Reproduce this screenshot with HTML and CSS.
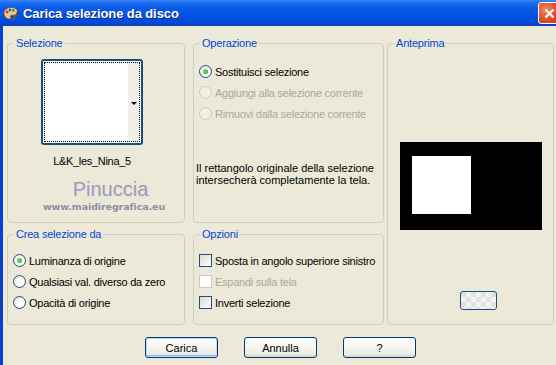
FILE: index.html
```html
<!DOCTYPE html>
<html lang="it">
<head>
  <meta charset="UTF-8">
  <title>Carica selezione da disco</title>
  <link rel="stylesheet" href="styles.css">
</head>
<body>
  <div class="window">
    <!-- Title bar -->
    <div class="titlebar">
      <svg class="app-icon" width="16" height="16" viewBox="0 0 16 16">
        <path d="M8 1.5c-4 0-7 2.5-7 6 0 3 2.4 5.5 5.5 5.5 1.3 0 1.5-1 1-1.8-.6-1 .1-1.9 1.2-1.9h2c2 0 3.8-1.3 3.8-3.4 0-2.6-2.8-4.4-6.5-4.4z" fill="#e8c89a" stroke="#7a5030" stroke-width="0.8"/>
        <circle cx="4.2" cy="6" r="1.3" fill="#e02020"/>
        <circle cx="7" cy="4" r="1.3" fill="#2050e0"/>
        <circle cx="10.3" cy="4.4" r="1.3" fill="#20a020"/>
        <circle cx="4.3" cy="9.4" r="1.2" fill="#f0d020"/>
        <path d="M9 14.5l6-8" stroke="#8a4a20" stroke-width="1.6"/>
        <path d="M14 7.6l1.4-1.8" stroke="#404040" stroke-width="1.8"/>
      </svg>
      <span class="title">Carica selezione da disco</span>
      <span class="close-btn">
        <svg width="13" height="13" viewBox="0 0 13 13"><path d="M2.5 2.5l8 8M10.5 2.5l-8 8" stroke="#fff" stroke-width="2"/></svg>
      </span>
    </div>

    <div class="frame">
      <div class="groups">
        <!-- Selezione -->
        <div class="group g-selezione">
          <div class="legend">Selezione</div>
          <div class="thumb">
            <div class="thumb-inner"><span class="thumb-arrow"></span></div>
          </div>
          <div class="thumb-name">L&amp;K_les_Nina_5</div>
          <div class="watermark">
            <div class="wm-name">Pinuccia</div>
            <div class="wm-url">www.maidiregrafica.eu</div>
          </div>
        </div>

        <!-- Operazione -->
        <div class="group g-operazione">
          <div class="legend">Operazione</div>
          <div class="options">
            <div class="opt"><span class="radio checked"></span>Sostituisci selezione</div>
            <div class="opt disabled"><span class="radio"></span>Aggiungi alla selezione corrente</div>
            <div class="opt disabled"><span class="radio"></span>Rimuovi dalla selezione corrente</div>
          </div>
          <p class="note">Il rettangolo originale della selezione<br>intersecherà completamente la tela.</p>
        </div>

        <!-- Anteprima -->
        <div class="group g-anteprima">
          <div class="legend">Anteprima</div>
          <div class="preview"><div class="preview-sel"></div></div>
          <div class="preview-btn"></div>
        </div>

        <!-- Crea selezione da -->
        <div class="group g-crea">
          <div class="legend">Crea selezione da</div>
          <div class="options options-low">
            <div class="opt"><span class="radio checked"></span>Luminanza di origine</div>
            <div class="opt"><span class="radio"></span>Qualsiasi val. diverso da zero</div>
            <div class="opt"><span class="radio"></span>Opacità di origine</div>
          </div>
        </div>

        <!-- Opzioni -->
        <div class="group g-opzioni">
          <div class="legend">Opzioni</div>
          <div class="options options-low">
            <div class="opt"><span class="check"></span>Sposta in angolo superiore sinistro</div>
            <div class="opt disabled"><span class="check"></span>Espandi sulla tela</div>
            <div class="opt"><span class="check"></span>Inverti selezione</div>
          </div>
        </div>
      </div>

      <div class="buttons">
        <button class="btn default">Carica</button>
        <button class="btn">Annulla</button>
        <button class="btn">?</button>
      </div>
    </div>
  </div>
</body>
</html>
```

FILE: styles.css
```css
body {
  margin: 0;
  font-family: "Liberation Sans", Arial, sans-serif;
  font-size: 11px;
  letter-spacing: -0.2px;
  color: #000;
  background: #ece9d8;
}
.window {
  width: 556px;
  height: 365px;
  overflow: hidden;
  background: #ece9d8;
}

/* Title bar */
.titlebar {
  height: 26px;
  display: flex;
  align-items: center;
  background: linear-gradient(to bottom, #3a87f8 0%, #1f6ff2 10%, #0a5ce8 30%, #0050e0 70%, #0448d0 88%, #0a3fb8 100%);
  color: #fff;
}
.app-icon {
  margin-left: 3px;
  margin-top: 1px;
}
.title {
  margin-left: 4px;
  font-weight: bold;
  font-size: 13px;
  letter-spacing: -0.1px;
  text-shadow: 1px 1px 0 #0a2a80;
}
.close-btn {
  margin-left: auto;
  margin-right: -4px;
  width: 20px;
  height: 20px;
  border: 1px solid #fff;
  border-radius: 3px;
  background: radial-gradient(circle at 35% 35%, #f08a60, #d9482a 60%, #c03418);
  display: flex;
  align-items: center;
  justify-content: center;
}

/* Body */
.frame {
  border-left: 3px solid #0841d0;
  height: 339px;
  padding: 17px 0 0 4px;
}
.groups {
  display: grid;
  grid-template-columns: 178px 8px 191px 3px 167px;
  grid-template-rows: 180px 11px 91px;
}
.group {
  border: 1px solid #d0d0bf;
  border-radius: 4px;
}
.legend {
  width: fit-content;
  margin: -7px 0 0 6px;
  padding: 0 2px;
  line-height: 13px;
  color: #0046d5;
  background: #ece9d8;
}
.g-selezione { grid-column: 1; grid-row: 1; }
.g-operazione { grid-column: 3; grid-row: 1; }
.g-anteprima { grid-column: 5; grid-row: 1 / 4; }
.g-crea { grid-column: 1; grid-row: 3; }
.g-opzioni { grid-column: 3; grid-row: 3; }

/* Selezione */
.thumb {
  margin: 9px 0 0 33px;
  width: 98px;
  height: 82px;
  border: 2px solid #1c4e86;
  border-radius: 3px;
  background: #fff;
}
.thumb-inner {
  height: 78px;
  margin: 1px;
  border: 1px dotted #000;
  background: linear-gradient(to right, #fff 88%, #f0efe8 88%);
  position: relative;
}
.thumb-arrow {
  position: absolute;
  right: 2px;
  top: 39px;
  border-left: 3px solid transparent;
  border-right: 3px solid transparent;
  border-top: 3px solid #000;
}
.thumb-name {
  width: 168px;
  margin-top: 10px;
  text-align: center;
  letter-spacing: -0.3px;
}
.watermark {
  width: 138px;
  margin: 12px 0 0 30px;
  text-align: center;
  color: #9c9cb4;
  letter-spacing: 0;
}
.wm-name {
  padding-left: 7px;
  font-size: 20px;
  line-height: 21px;
  text-shadow: 1px 1px 0 #e0e0ea;
}
.wm-url {
  margin-top: 1px;
  padding-right: 6px;
  font-family: "DejaVu Sans", sans-serif;
  font-weight: bold;
  font-size: 9.5px;
  line-height: 12px;
  letter-spacing: -0.1px;
  color: #8e8ea4;
}

/* Options */
.options {
  margin: 15px 0 0 5px;
  display: flex;
  flex-direction: column;
  gap: 8px;
}
.options-low {
  margin-top: 13px;
}
.opt {
  display: flex;
  align-items: center;
  gap: 3px;
  height: 13px;
  white-space: nowrap;
  letter-spacing: -0.25px;
}
.opt.disabled {
  color: #aca899;
}
.radio {
  width: 11px;
  height: 11px;
  border: 1px solid #1c5180;
  border-radius: 50%;
  background: radial-gradient(circle at 60% 60%, #fff 30%, #dcdad0);
  position: relative;
  flex: none;
}
.radio.checked::after {
  content: "";
  position: absolute;
  left: 3px;
  top: 3px;
  width: 5px;
  height: 5px;
  border-radius: 50%;
  background: radial-gradient(circle at 40% 40%, #6fe06f, #21a121);
}
.disabled .radio {
  border-color: #cac8bb;
  background: #f0efe8;
}
.check {
  width: 11px;
  height: 11px;
  border: 1px solid #1c5180;
  background: linear-gradient(135deg, #dcdad0, #fff);
  flex: none;
}
.disabled .check {
  border-color: #cac8bb;
  background: #fff;
}
.note {
  margin: 42px 0 0 2px;
  line-height: 12px;
  letter-spacing: 0;
}

/* Anteprima */
.preview {
  margin: 92px 0 0 12px;
  width: 142px;
  height: 88px;
  background: #000;
  padding: 14px 0 0 12px;
  box-sizing: border-box;
}
.preview-sel {
  width: 59px;
  height: 58px;
  background: #fff;
}
.preview-btn {
  margin: 61px 0 0 72px;
  width: 35px;
  height: 17px;
  border: 1px solid #1c4e86;
  border-radius: 3px;
  background: repeating-conic-gradient(#f4f4f0 0 25%, #e2e2dc 0 50%) 0 0 / 10px 10px;
}

/* Buttons */
.buttons {
  display: flex;
  gap: 26px;
  padding: 12px 0 0 138px;
}
.btn {
  width: 73px;
  height: 21px;
  padding: 0;
  font-family: inherit;
  font-size: 11px;
  color: #000;
  border: 1px solid #003c74;
  border-radius: 3px;
  background: linear-gradient(to bottom, #fff 0%, #f6f5f0 50%, #ecebe4 85%, #d6d0c5 100%);
}
.btn.default {
  box-shadow: inset 0 0 0 1px #c4d8f6, inset 0 -1px 0 1px #98b8ea;
}
```
